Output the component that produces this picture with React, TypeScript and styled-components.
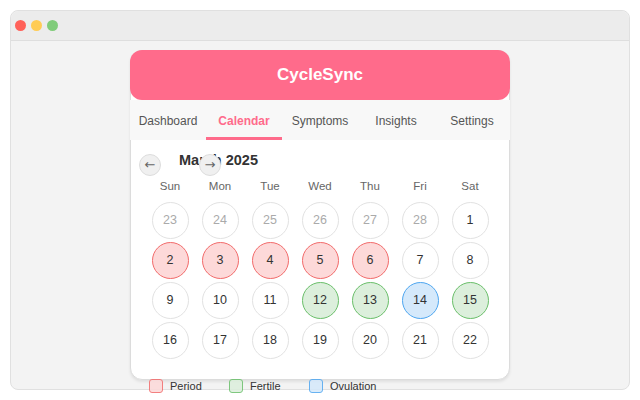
import { FC } from 'react';
import styled, { createGlobalStyle } from 'styled-components';

type DayKind = 'muted' | 'normal' | 'period' | 'fertile' | 'ovulation';

interface Day {
  n: number;
  kind: DayKind;
}

const tabs = ['Dashboard', 'Calendar', 'Symptoms', 'Insights', 'Settings'];
const weekDays = ['Sun', 'Mon', 'Tue', 'Wed', 'Thu', 'Fri', 'Sat'];

const kindOf = (n: number): DayKind => {
  if (n >= 2 && n <= 6) return 'period';
  if (n === 14) return 'ovulation';
  if (n >= 12 && n <= 15) return 'fertile';
  return 'normal';
};

const days: Day[] = [
  ...[23, 24, 25, 26, 27, 28].map((n) => ({ n, kind: 'muted' as DayKind })),
  ...Array.from({ length: 22 }, (_, i) => ({ n: i + 1, kind: kindOf(i + 1) })),
];

const dayColors: Record<DayKind, { bg: string; border: string; color: string }> = {
  muted: { bg: '#ffffff', border: '#e2e2e2', color: '#aaaaaa' },
  normal: { bg: '#ffffff', border: '#e2e2e2', color: '#333333' },
  period: { bg: '#fdd9d9', border: '#f26b6b', color: '#333333' },
  fertile: { bg: '#dcefdc', border: '#6abf6a', color: '#333333' },
  ovulation: { bg: '#d5e9fb', border: '#4ea6f0', color: '#333333' },
};

const legend: { label: string; kind: DayKind }[] = [
  { label: 'Period', kind: 'period' },
  { label: 'Fertile', kind: 'fertile' },
  { label: 'Ovulation', kind: 'ovulation' },
];

const App: FC = () => {
  return (
    <>
      <GlobalStyle />
      <Window>
        <TitleBar>
          <Dot $color='#ff6159' />
          <Dot $color='#ffcc55' />
          <Dot $color='#80cc7a' />
        </TitleBar>
        <Body>
          <Card>
            <Header>CycleSync</Header>
            <Nav>
              {tabs.map((tab) => (
                <Tab key={tab} $active={tab === 'Calendar'}>
                  {tab}
                </Tab>
              ))}
            </Nav>
            <CalendarBody>
              <MonthHeader>
                <NavButton $col={1}>←</NavButton>
                <MonthTitle>March 2025</MonthTitle>
                <NavButton $col={4}>→</NavButton>
              </MonthHeader>
              <Grid>
                {weekDays.map((d) => (
                  <WeekDay key={d}>{d}</WeekDay>
                ))}
                {days.map((d, i) => (
                  <DayCell key={i}>
                    <DayCircle $kind={d.kind}>{d.n}</DayCircle>
                  </DayCell>
                ))}
              </Grid>
              <Legend>
                {legend.map((item) => (
                  <LegendItem key={item.label}>
                    <LegendSwatch $kind={item.kind} />
                    {item.label}
                  </LegendItem>
                ))}
              </Legend>
            </CalendarBody>
          </Card>
        </Body>
      </Window>
    </>
  );
};

export default App;

const GlobalStyle = createGlobalStyle`
  html, body {
    margin: 0;
    padding: 0;
    background: #ffffff;
    font-family: 'Liberation Sans', Arial, sans-serif;
  }
  * {
    box-sizing: border-box;
  }
`;

const Window = styled.div`
  margin: 10px;
  width: 620px;
  height: 380px;
  background-color: #f3f3f3;
  border: 1px solid #e0e0e0;
  border-radius: 8px;
  display: flex;
  flex-direction: column;
`;

const TitleBar = styled.div`
  height: 30px;
  flex-shrink: 0;
  background-color: #ececec;
  border-bottom: 1px solid #dedede;
  border-radius: 8px 8px 0 0;
  display: flex;
  align-items: center;
  padding: 0 0 0 4px;
  column-gap: 5px;
`;

const Dot = styled.span<{ $color: string }>`
  width: 11px;
  height: 11px;
  border-radius: 50%;
  background-color: ${(p) => p.$color};
`;

const Body = styled.div`
  flex: 1;
  display: flex;
  justify-content: center;
  padding-top: 9px;
`;

const Card = styled.div`
  width: 380px;
  height: 330px;
  background-color: #ffffff;
  border: 1px solid #dcdcdc;
  border-radius: 12px;
  box-shadow: 0 2px 3px rgba(0, 0, 0, 0.08);
  display: flex;
  flex-direction: column;
`;

const Header = styled.div`
  height: 50px;
  flex-shrink: 0;
  margin: -1px -1px 0;
  background-color: #ff6b8b;
  border-radius: 12px;
  color: #ffffff;
  font-size: 17px;
  font-weight: bold;
  display: flex;
  align-items: center;
  justify-content: center;
`;

const Nav = styled.div`
  height: 40px;
  flex-shrink: 0;
  background-color: #f8f8f8;
  display: grid;
  grid-template-columns: repeat(5, 1fr);
  margin: 0 -1px;
`;

const Tab = styled.div<{ $active: boolean }>`
  display: flex;
  align-items: center;
  justify-content: center;
  font-size: 12px;
  padding-top: 5px;
  color: ${(p) => (p.$active ? '#ff6b8b' : '#555555')};
  font-weight: ${(p) => (p.$active ? 'bold' : 'normal')};
  border-bottom: 3px solid ${(p) => (p.$active ? '#ff6b8b' : 'transparent')};
`;

const CalendarBody = styled.div`
  padding: 14px 14px 0;
  display: flex;
  flex-direction: column;
`;

const MonthHeader = styled.div`
  display: grid;
  grid-template-columns: 22px 18px 20px 22px 1fr;
  grid-template-rows: 22px;
  margin-left: -6px;
`;

const NavButton = styled.button<{ $col: number }>`
  grid-row: 1;
  grid-column: ${(p) => p.$col};
  width: 22px;
  height: 22px;
  padding: 0;
  border-radius: 50%;
  border: 1px solid #dddddd;
  background-color: #f0f0f0;
  color: #666666;
  font-family: 'DejaVu Sans', sans-serif;
  font-size: 13px;
  line-height: 18px;
  z-index: 1;
`;

const MonthTitle = styled.div`
  grid-row: 1;
  grid-column: 3 / -1;
  align-self: start;
  margin-top: -3px;
  font-size: 14.5px;
  line-height: 18px;
  font-weight: bold;
  color: #333333;
`;

const Grid = styled.div`
  margin-top: 4px;
  display: grid;
  grid-template-columns: repeat(7, 50px);
  grid-template-rows: 20px;
  grid-auto-rows: 40px;
`;

const WeekDay = styled.div`
  display: flex;
  align-items: flex-start;
  justify-content: center;
  font-size: 11.5px;
  color: #666666;
`;

const DayCell = styled.div`
  display: flex;
  align-items: center;
  justify-content: center;
`;

const DayCircle = styled.div<{ $kind: DayKind }>`
  width: 37px;
  height: 37px;
  border-radius: 50%;
  display: flex;
  align-items: center;
  justify-content: center;
  font-size: 12.5px;
  background-color: ${(p) => dayColors[p.$kind].bg};
  border: 1px solid ${(p) => dayColors[p.$kind].border};
  color: ${(p) => dayColors[p.$kind].color};
`;

const Legend = styled.div`
  margin-top: 19px;
  display: flex;
  padding-left: 4px;
`;

const LegendItem = styled.div`
  width: 80px;
  display: flex;
  align-items: center;
  column-gap: 7px;
  font-size: 11px;
  color: #333333;
`;

const LegendSwatch = styled.span<{ $kind: DayKind }>`
  width: 14px;
  height: 14px;
  border-radius: 3px;
  background-color: ${(p) => dayColors[p.$kind].bg};
  border: 1px solid ${(p) => dayColors[p.$kind].border};
  opacity: 0.85;
`;
